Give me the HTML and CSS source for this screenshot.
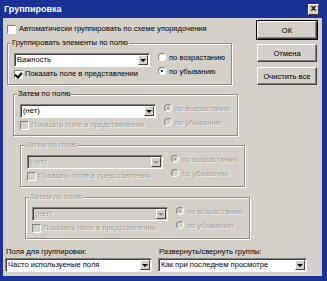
FILE: index.html
```html
<!DOCTYPE html>
<html lang="ru">
<head>
    <meta charset="UTF-8">
    <meta name="viewport" content="width=device-width, initial-scale=1.0">
    <title>Группировка</title>
    <link rel="stylesheet" href="styles.css">
</head>
<body>

    <div class="window">

        <!-- Title bar -->
        <div class="titlebar">
            <span class="title">Группировка</span>
            <span class="close">×</span>
        </div>

        <!-- Dialog body -->
        <div class="client">
            <div class="main">
                <div class="left">
                    <div class="check top"><span class="box"></span>Автоматически группировать по схеме упорядочения</div>

                    <fieldset class="group g1">
                        <legend>Группировать элементы по полю</legend>
                        <div class="field">
                            <div class="select"><span class="value">Важность</span><span class="arrow"></span></div>
                            <div class="check"><span class="box checked"></span>Показать поле в представлении</div>
                        </div>
                        <div class="radios">
                            <div class="radio"><span class="dot"></span>по возрастанию</div>
                            <div class="radio"><span class="dot on"></span>по убыванию</div>
                        </div>
                    </fieldset>

                    <fieldset class="group g2">
                        <legend>Затем по полю</legend>
                        <div class="field">
                            <div class="select"><span class="value">(нет)</span><span class="arrow"></span></div>
                            <div class="check disabled"><span class="box"></span>Показать поле в представлении</div>
                        </div>
                        <div class="radios disabled">
                            <div class="radio"><span class="dot on"></span>по возрастанию</div>
                            <div class="radio"><span class="dot"></span>по убыванию</div>
                        </div>
                    </fieldset>

                    <fieldset class="group g3 disabled">
                        <legend>Затем по полю</legend>
                        <div class="field">
                            <div class="select"><span class="value">(нет)</span><span class="arrow"></span></div>
                            <div class="check"><span class="box"></span>Показать поле в представлении</div>
                        </div>
                        <div class="radios">
                            <div class="radio"><span class="dot on"></span>по возрастанию</div>
                            <div class="radio"><span class="dot"></span>по убыванию</div>
                        </div>
                    </fieldset>

                    <fieldset class="group g4 disabled">
                        <legend>Затем по полю</legend>
                        <div class="field">
                            <div class="select"><span class="value">(нет)</span><span class="arrow"></span></div>
                            <div class="check"><span class="box"></span>Показать поле в представлении</div>
                        </div>
                        <div class="radios">
                            <div class="radio"><span class="dot on"></span>по возрастанию</div>
                            <div class="radio"><span class="dot"></span>по убыванию</div>
                        </div>
                    </fieldset>
                </div>

                <!-- Buttons -->
                <div class="buttons">
                    <button class="btn default">ОК</button>
                    <button class="btn">Отмена</button>
                    <button class="btn">Очистить все</button>
                </div>
            </div>

            <!-- Bottom pickers -->
            <div class="bottom">
                <div class="pick first">
                    <div class="label">Поля для группировки:</div>
                    <div class="select"><span class="value">Часто используеные поля</span><span class="arrow"></span></div>
                </div>
                <div class="pick second">
                    <div class="label">Развернуть/свернуть группы:</div>
                    <div class="select"><span class="value">Как при последнем просмотре</span><span class="arrow"></span></div>
                </div>
            </div>
        </div>
    </div>

</body>
</html>
```

FILE: styles.css
```css
body {
    margin: 0;
    background-color: #1a3296;
    font-family: "Liberation Sans", Arial, sans-serif;
    font-size: 7.6px;
    color: #000;
}

.window {
    width: 327px;
    height: 281px;
}

/* Title bar */
.titlebar {
    height: 18px;
    display: flex;
    align-items: center;
    justify-content: space-between;
    padding: 0 8px 0 4px;
    box-sizing: border-box;
}

.title {
    color: #fff;
    font-weight: bold;
    font-size: 9px;
}

.close {
    width: 11px;
    height: 11px;
    background-color: #d4d0c8;
    border: 1px solid;
    border-color: #fff #404040 #404040 #fff;
    box-sizing: border-box;
    font-size: 10px;
    font-weight: bold;
    line-height: 8px;
    text-align: center;
}

/* Dialog body */
.client {
    margin: 0 5px 0 3px;
    height: 258px;
    background-color: #d4d0c8;
    box-sizing: border-box;
}

.main {
    display: flex;
}

.left {
    flex: 1;
}

/* Checkboxes */
.check {
    display: flex;
    align-items: center;
    height: 10px;
    line-height: 10px;
    white-space: nowrap;
}

.check .box {
    width: 9px;
    height: 9px;
    margin-right: 2px;
    background-color: #fff;
    border: 1px solid;
    border-color: #808080 #fff #fff #808080;
    box-sizing: border-box;
    position: relative;
}

.check .box.checked::after {
    content: "";
    position: absolute;
    left: 1px;
    top: 0;
    width: 3px;
    height: 5px;
    border: solid #000;
    border-width: 0 2px 2px 0;
    transform: rotate(40deg);
}

.check.top {
    margin: 6px 0 0 4px;
}

.check.top .box {
    margin-right: 3px;
}

/* Group boxes */
.group {
    width: 225px;
    margin: 4px 0 0;
    padding: 0 0 5px;
    border: 1px solid #8e8b85;
    box-shadow: inset 1px 1px 0 #fff, 1px 1px 0 #fff;
    display: flex;
    box-sizing: border-box;
    min-width: 0;
}

.group legend {
    margin-left: 3px;
    padding: 0 1px;
    line-height: 10px;
    background-color: #d4d0c8;
}

.g1 { margin-left: 4px; }
.g2 { margin-left: 10px; }
.g3 { margin-left: 17px; }
.g4 { margin-left: 22px; margin-top: 5px; }

.field {
    width: 136px;
    margin: 5px 0 0 6px;
}

.field .check {
    margin-top: 2px;
}

.radios {
    margin: 2px 0 0 8px;
}

.radio {
    display: flex;
    align-items: center;
    height: 14px;
    white-space: nowrap;
}

.radio .dot {
    width: 8px;
    height: 8px;
    margin-right: 3px;
    border-radius: 50%;
    background-color: #fff;
    border: 1px solid;
    border-color: #808080 #fff #fff #808080;
    box-sizing: border-box;
    position: relative;
}

.radio .dot.on::after {
    content: "";
    position: absolute;
    left: 2px;
    top: 2px;
    width: 2px;
    height: 2px;
    border-radius: 50%;
    background-color: #000;
}

/* Combo boxes */
.select {
    display: flex;
    height: 14px;
    background-color: #fff;
    border: 1px solid;
    border-color: #808080 #fff #fff #808080;
    box-shadow: inset 1px 1px 0 #404040;
    box-sizing: border-box;
}

.select .value {
    flex: 1;
    padding-left: 2px;
    line-height: 12px;
    white-space: nowrap;
    overflow: hidden;
}

.select .arrow {
    width: 10px;
    margin: 1px 1px 1px 0;
    background-color: #d4d0c8;
    border: 1px solid;
    border-color: #fff #404040 #404040 #fff;
    box-sizing: border-box;
    display: flex;
    align-items: center;
    justify-content: center;
}

.select .arrow::after {
    content: "";
    border-style: solid;
    border-width: 3px 3px 0;
    border-color: #000 transparent transparent;
}

/* Disabled state */
.disabled .check,
.check.disabled,
.disabled .radio,
.disabled legend,
.disabled .select .value {
    color: #a29e96;
    text-shadow: 1px 1px 0 rgba(255, 255, 255, 0.7);
}

.disabled .check .box,
.check.disabled .box,
.disabled .radio .dot {
    background-color: #d4d0c8;
}

.disabled .radio .dot.on::after {
    background-color: #8e8b85;
}

.disabled .select {
    background-color: #d4d0c8;
}

.disabled .select .arrow::after {
    border-top-color: #8e8b85;
}

/* Buttons */
.buttons {
    width: 60px;
    margin: 3px 5px 0 0;
    display: flex;
    flex-direction: column;
    gap: 5px;
}

.btn {
    height: 18px;
    padding: 0;
    font-family: inherit;
    font-size: 7.6px;
    background-color: #d4d0c8;
    border: 1px solid;
    border-color: #fff #404040 #404040 #fff;
    box-shadow: inset -1px -1px 0 #808080;
}

.btn.default {
    outline: 1px solid #000;
}

/* Bottom pickers */
.bottom {
    display: flex;
    gap: 6px;
    padding-left: 2px;
    margin-top: 8px;
}

.pick.first { width: 147px; }
.pick.second { width: 149px; }

.pick .label {
    height: 10px;
    line-height: 10px;
    padding-left: 1px;
    margin-bottom: 1px;
    white-space: nowrap;
}
```
